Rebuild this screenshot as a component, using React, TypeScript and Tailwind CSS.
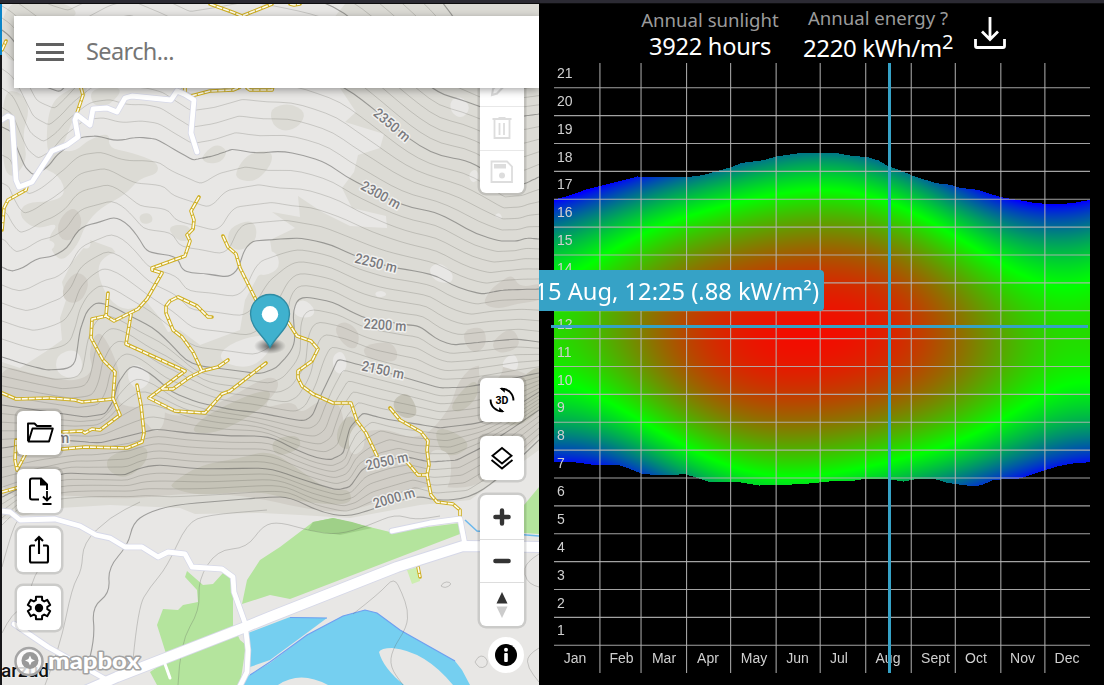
import { useLayoutEffect, useRef } from "react";
import type { ReactNode } from "react";

type Pt = [number, number];

const parse = (s: string): Pt[] =>
  s.trim().split(/\s+/).map((p) => p.split(",").map(Number) as Pt);

/* ---------- Terrain ---------- */

// Index contours every 50 m; "|" separates stretches between ridges and valleys.
const CONTOURS = [
  "2,-90|70,-80|130,-90|190,-70|300,-60|400,-40 445,4 453,16 480,60 512,72|524,70 539,68",
  "2,-30|70,-10|130,-30|190,-5|250,-15|333,4 347,15 400,60 432,88 443,97 457,98 480,107 508,116|524,116 539,114",
  "2,30|10,36 24,55 40,85 60,92|80,70 105,50 130,45|165,60 190,78|215,75 250,66|300,70 347,88 375,110 410,140 430,153 453,160 470,160 480,165 505,186|524,184 539,177",
  "2,127|12,132 17,148 25,167 33,175|47,168 57,155 80,137 97,136|117,141 137,137 157,139 175,150 193,160|213,156 233,149|253,154 270,152 288,150 330,164 350,180 361,184 380,195 402,206 442,213 455,222 475,234 500,241|517,241 527,238 539,239",
  "2,267|8,270 13,271|23,268 37,258 53,257 67,248 80,227 100,222 115,217|127,223 137,235 147,252 163,255 177,255 183,273 200,273 227,277|237,272 245,248 253,241 280,239 300,238|327,243 357,257 397,269 413,270 437,276 457,288 482,294|503,290 539,289",
  "2,357|27,365 47,370|67,369 75,365 80,330 87,310 97,302|110,305 133,318 150,325 167,340 190,365 233,370 260,374|275,369 290,353 295,343 293,310 298,299 307,297|333,302 363,318 407,325 420,326 437,340 453,345|483,342 517,339 539,342",
  "2,405|50,412 85,417|105,414 114,400 117,385 128,368 136,366|150,373 173,393 200,403 233,410 262,413 285,418 303,421|312,417 320,397 332,372 338,359|360,365 403,377 440,388|467,387 500,381 539,373",
  "2,448|60,440|100,443 140,433 157,429|187,433 233,436 270,436 290,447 313,457 330,460|343,454 350,427 363,413|385,419 417,424 440,428|480,423 510,410 539,392",
  "2,497|20,488|63,473 127,475 140,467 160,465|200,469 270,468 303,480 337,490|350,487 363,468 387,460 407,457|430,462 457,460|483,447 510,430 539,410",
  "2,532|20,512|60,505 100,502 147,502 173,505|220,501 270,497 290,497 320,512 347,517|370,510 400,502 417,495|437,501 470,498|497,480 539,440",
].map((c) => {
  const parts = c.split("|").map(parse);
  return parts.slice(1).map((p, i) => [parts[i][parts[i].length - 1], ...p]);
});

const SAMPLES = 12;

function resample(line: Pt[]): Pt[] {
  const acc = [0];
  for (let i = 1; i < line.length; i++)
    acc.push(acc[i - 1] + Math.hypot(line[i][0] - line[i - 1][0], line[i][1] - line[i - 1][1]));
  const total = acc[acc.length - 1];
  return Array.from({ length: SAMPLES }, (_, k) => {
    const d = ((k + 1) / SAMPLES) * total;
    let i = 1;
    while (i < line.length - 1 && acc[i] < d) i++;
    const t = (d - acc[i - 1]) / (acc[i] - acc[i - 1] || 1);
    return [
      line[i - 1][0] + (line[i][0] - line[i - 1][0]) * t,
      line[i - 1][1] + (line[i][1] - line[i - 1][1]) * t,
    ] as Pt;
  });
}

// Open curve through the midpoints of the given polyline.
function curve(p: Pt[]) {
  let d = `M${p[0][0]},${p[0][1]}`;
  for (let i = 1; i < p.length - 1; i++)
    d += `Q${p[i][0].toFixed(1)},${p[i][1].toFixed(1)} ${((p[i][0] + p[i + 1][0]) / 2).toFixed(1)},${((p[i][1] + p[i + 1][1]) / 2).toFixed(1)}`;
  const e = p[p.length - 1];
  return d + `L${e[0]},${e[1]}`;
}

function blob(s: string) {
  const p = parse(s);
  const mid = (a: Pt, b: Pt) => `${(a[0] + b[0]) / 2},${(a[1] + b[1]) / 2}`;
  return (
    `M${mid(p[p.length - 1], p[0])}` +
    p.map((q, i) => `Q${q[0]},${q[1]} ${mid(q, p[(i + 1) % p.length])}`).join("") +
    "Z"
  );
}

const sampled = CONTOURS.map((c) => [c[0][0], ...c.map(resample).flat()]);
const minorLines: string[] = [];
for (let i = 0; i < sampled.length - 1; i++)
  for (let k = 1; k < 5; k++)
    minorLines.push(
      curve(
        sampled[i].map((p, j) => {
          const q = sampled[i + 1][j];
          const t = k / 5;
          return [p[0] + (q[0] - p[0]) * t, p[1] + (q[1] - p[1]) * t] as Pt;
        })
      )
    );
const majorLines = sampled.slice(0, 9).map(curve);
majorLines.push(
  curve(parse("90,657 95,637 92,607 110,593 108,568 128,545 133,523 147,513 173,505 220,501 270,497 290,497 320,512 347,517 370,510 417,495 437,501 470,498 497,480 539,440"))
);

const VALLEY_LINES = [
  "45,685 60,647 72,587 82,570 83,543 110,517 140,502",
  "133,660 138,607 150,587 167,567 187,523 207,515 267,510",
  "178,685 180,643 200,610 198,580 217,550 247,548 263,525 280,522 310,531 338,535 370,525 395,514 415,520 440,516",
  "2,567 12,530 20,517",
  "2,633 12,612 32,605 30,585 40,567",
  "353,614 380,593 394,577 402,593 408,610 407,627 392,650 390,667 403,685",
  "441,586 443,582 450,582 451,585 445,588 441,586",
  "475,662 478,656 484,656 488,661 486,667 479,668 475,662",
  "539,554 526,562 524,575 530,584 539,587",
  "539,648 527,655 528,668 539,682",
].map((s) => curve(parse(s)));

const SHADE_LIGHT = [
  "2,0 55,0 78,10 72,20 40,16 30,60 2,62",
  "2,90 22,92 30,110 22,135 28,160 12,180 2,165",
  "48,105 70,88 92,84 72,120 62,150 46,158",
  "35,165 58,150 75,152 88,140 110,132 108,148 130,152 158,162 158,174 140,178 125,195 100,208 85,225 78,245 60,264 46,240 60,222 35,230 18,215 26,202 50,202 66,195 60,175",
  "90,88 125,86 110,106 92,106",
  "200,158 215,143 228,150 222,162 208,164",
  "235,172 248,153 272,150 272,164 256,182 238,180",
  "270,108 290,103 306,112 300,126 285,132 272,125",
  "228,228 254,218 258,240 240,252 228,245",
  "166,226 190,224 192,240 178,242",
  "138,215 150,212 154,222 142,225",
];
const SLOPE =
  "345,4 539,4 539,450 470,500 420,505 350,518 300,515 262,513 195,514 180,508 110,505 60,508 2,520 2,362 20,368 45,352 62,340 60,318 66,300 62,282 72,262 90,240 112,248 124,262 130,285 145,300 160,318 168,332 180,330 200,345 240,330 245,300 258,276 274,266 270,240 295,228 272,212 300,217 298,196 322,212 350,226 387,228 386,216 352,208 342,188 354,172 358,155 380,148 384,134 345,122 356,112 340,88 300,60";
const LIGHT_SPOTS = [
  "105,255 130,248 140,262 150,300 128,312 108,300 96,270",
  "56,355 76,348 84,365 76,380 56,374",
  "254,260 262,250 277,252 280,268 266,276 255,273",
  "80,240 91,238 90,249 81,248",
  "155,256 178,254 200,276 228,280 238,266 250,300 222,322 200,324 180,298 160,290",
  "226,345 262,333 274,345 258,364 240,368 218,360",
  "128,367 140,364 153,378 140,392 128,382",
  "428,268 440,262 454,274 451,284 434,281",
  "450,100 462,96 471,108 462,119 451,113",
  "468,174 476,168 480,178 472,184",
  "493,216 500,212 503,220",
  "292,306 304,298 316,310 311,318 296,317",
  "332,356 342,350 348,364 342,375 334,371",
  "503,360 514,352 520,366 510,377 502,370",
  "153,392 165,396 165,425 154,434 142,415",
  "423,456 452,452 450,490 430,500",
  "350,430 362,421 366,450 350,454",
  "374,293 382,290 388,295 378,298",
  "30,246 44,238 58,244 44,256 20,262",
];
const SHADE_MID = [
  "58,220 74,205 84,222 72,242 58,238",
  "62,288 76,270 90,280 84,298 74,304 64,300",
  "-8,362 40,376 75,382 94,372 88,352 98,328 112,350 122,380 116,402 132,408 150,405 180,420 230,398 270,374 282,385 260,410 294,400 300,415 322,398 342,404 345,440 380,426 420,442 450,410 458,380 480,360 550,380 550,430 500,470 470,490 420,484 350,514 300,508 260,498 200,492 120,500 60,494 -8,500",
  "500,282 512,274 520,288 545,282 545,300 515,304 500,309 482,305 490,290",
  "333,328 345,320 360,332 357,350 344,346",
  "364,345 390,341 398,352 396,362 378,361 364,356",
  "463,330 484,326 487,345 475,354 465,345",
  "493,340 512,326 522,345 505,354 493,350",
];
const SHADE_DARK = [
  "188,432 210,412 270,386 270,402 240,422 213,434",
  "108,455 147,443 148,462 125,480 106,470",
  "173,482 200,465 240,458 270,450 300,470 330,492 350,488 352,506 300,502 255,490 200,496 170,488",
  "338,425 352,413 360,430 350,452 336,444",
  "390,402 408,390 420,415 402,420",
  "270,440 298,434 302,448 276,458",
  "448,407 475,376 480,395 460,414",
  "434,428 452,430 472,445 455,457 440,452",
  "498,402 545,355 545,410 508,432",
];

const TRACKS = [
  "210,4 232,12 242,16 262,8 272,4",
  "81,88 83,95 77,113", "185,86 185,92", "191,96 210,91 233,90 240,87",
  "247,88 250,90 272,90 273,86", "2,50 6,41", "27,186 26,190 8,200 4,208 2,230",
  "290,4 294,5 300,4",
  "199,197 191,211 194,220 193,229 187,235 190,241 185,256 152,268 152,270 162,273 147,299 138,309 114,321 106,316 92,319 91,338 103,360 115,372 113,398 120,415 100,430 92,429 85,433 82,431 62,432",
  "108,293 106,316", "131,314 126,344 185,371 149,398 175,411 205,413 222,394 230,391 266,363",
  "162,389 173,389 190,377 202,371 218,367 228,360",
  "202,371 193,352 182,337 173,330 166,313 166,306 170,301 178,297 197,306 208,317 212,317",
  "223,236 228,247 236,254 240,268 256,300",
  "288,322 297,336 311,341 318,349 312,361 298,371 298,378 302,386 313,394 333,403 351,403 357,421 366,433 378,458",
  "407,462 418,475 427,475",
  "390,408 400,420 421,432 428,441 427,450 429,465 427,475 431,495 437,502 453,504 460,510 460,517",
  "2,393 16,399 50,398 75,400 82,402 113,399",
  "137,385 141,405 144,433 142,442 127,448 85,447 62,449",
  "25,455 17,470 15,460 16,440", "2,492 20,487", "418,567 420,577",
];

const ROADS = [
  "0,121 8,116 12,118 16,180 19,187 32,182 52,151 67,145 78,137 75,120 77,115 90,125 93,109 107,108 117,112 125,98 132,96 171,100 177,91 184,94 194,100 191,133 197,152",
  "0,511 10,512 20,520 55,519 80,526 96,535 110,538 125,547 142,547 158,557 168,552 185,554 192,567 222,569 233,577 234,592 245,623 248,650 247,672 238,690",
  "14,624 48,647 107,680",
  "392,531 430,523 460,519 465,545",
];
const HIGHWAY = "85,691 117,677 243,628 270,617 397,567 463,546 539,547";

const LABELS: [number, number, number, string][] = [
  [392, 125, 40, "2350 m"], [381, 195, 29, "2300 m"], [376, 263, 14, "2250 m"],
  [385, 325, 4, "2200 m"], [383, 370, 12, "2150 m"], [387, 461, -12, "2050 m"], [394, 498, -16, "2000 m"],
];

function Blobs({ list, fill }: { list: string[]; fill: string }) {
  return (
    <g fill={fill}>
      {list.map((p) => <path key={p} d={blob(p)} />)}
    </g>
  );
}

function Contours({ list, stroke, width }: { list: string[]; stroke: string; width: number }) {
  return (
    <g fill="none" stroke={stroke} strokeWidth={width} strokeLinejoin="round">
      {list.map((d, i) => <path key={i} d={d} />)}
    </g>
  );
}

function Lines({ list, stroke, width, dash }: { list: string[]; stroke: string; width: number; dash?: string }) {
  return (
    <g fill="none" stroke={stroke} strokeWidth={width} strokeDasharray={dash} strokeLinejoin="round" strokeLinecap={dash ? "butt" : "round"}>
      {list.map((p, i) => <polyline key={i} points={p} />)}
    </g>
  );
}

function Terrain() {
  return (
    <svg width="537" height="681" viewBox="2 4 537 681" className="block">
      <rect x="2" y="4" width="537" height="681" fill="#e8e7e5" />
      <polygon fill="#b4e49d" points="242,604 247,580 260,560 280,547 313,522 333,518 390,532 460,523 460,534 290,599 270,595" />
      <polygon fill="#dcdbd5" points={SLOPE} />
      <Blobs fill="#dcdbd5" list={SHADE_LIGHT} />
      <Blobs fill="#e8e7e5" list={LIGHT_SPOTS.slice(0, 14)} />
      <Blobs fill="#d1cec7" list={SHADE_MID} />
      <Blobs fill="#c5c3b7" list={SHADE_DARK} />
      <Blobs fill="#dcdbd5" list={["148,390 166,394 162,432 138,420", "428,448 452,452 449,482 430,480", "348,432 364,422 365,450 350,457", "370,400 390,396 394,412 373,412", "478,355 500,350 505,375 480,390", ...LIGHT_SPOTS.slice(14, 17)]} />
      <Blobs fill="#e8e7e5" list={LIGHT_SPOTS.slice(17)} />
      <polygon fill="#9fd088" points="313,522 333,518 352,522 372,528 340,535 308,530" />
      <polygon fill="#b4e49d" points="187,571 203,585 213,584 223,573 233,580 233,625 240,640 246,645 240,685 157,685 150,672 168,660 157,625 163,609 178,610 183,605 198,602 197,590 185,577" />
      <polygon fill="#b4e49d" points="539,487 524,505 524,533 539,534" />
      <polygon fill="#cdeeb0" points="407,570 412,584 420,581 418,567" />
      <g fill="#75cff0">
        <polygon points="248,633 290,617 327,618 300,638 270,660 250,667" />
        <polygon points="246,677 270,663 307,635 343,616 365,610 377,613 400,630 455,661 462,670 470,685 240,685" />
      </g>
      <path d="M250,675 L270,662 L307,635 L343,616 L365,610 L377,613 L400,630 L455,661 M290,617.500 L327,618" fill="none" stroke="#6f9ff0" strokeWidth="1.200" />
      <path d="M379,652 Q381,648 392,648 Q425,651 453,685 L404,685 Q383,668 379,652Z M278,685 Q300,670 328,685Z" fill="#e8e7e5" />
      <Contours list={minorLines} stroke="rgba(90,90,85,.27)" width={0.9} />
      <Contours list={VALLEY_LINES} stroke="rgba(90,90,85,.3)" width={0.9} />
      <Contours list={majorLines} stroke="rgba(90,90,88,.52)" width={1.1} />
      <polyline points="465,520 477,531 539,536" fill="none" stroke="#6cb8ec" strokeWidth="1.500" />
      <Lines list={TRACKS} stroke="#ceae20" width={3.6} />
      <Lines list={TRACKS} stroke="#fffdf0" width={1.6} dash="6 1" />
      <Lines list={ROADS} stroke="#d6d8e8" width={6.4} />
      <Lines list={[HIGHWAY]} stroke="#d6d8e8" width={12} />
      <Lines list={ROADS} stroke="#fff" width={4.8} />
      <Lines list={[HIGHWAY, "165,664 170,678"]} stroke="#fff" width={3} />
      <Lines list={[HIGHWAY]} stroke="#fff" width={10} />
      <g className="font-['Roboto',sans-serif]" fontSize="14" fontWeight="500" fill="#7a7a7e" stroke="#f0f0ee" strokeWidth="3" paintOrder="stroke" textAnchor="middle" strokeLinejoin="round">
        {LABELS.map(([x, y, a, t]) => (
          <text key={t} transform={`translate(${x} ${y}) rotate(${a})`} y="4.800" textLength="43" lengthAdjust="spacingAndGlyphs">{t}</text>
        ))}
        <text x="63" y="443">m</text>
      </g>
      <defs>
        <radialGradient id="pinShadow">
          <stop offset="0" stopColor="#000" stopOpacity=".6" />
          <stop offset="1" stopColor="#000" stopOpacity="0" />
        </radialGradient>
      </defs>
      <ellipse cx="270" cy="346" rx="16" ry="8" fill="url(#pinShadow)" />
      <path d="M270,347.500 C264,336 250.500,328 250.500,314 A19.500,19.500 0 0 1 289.500,314 C289.500,328 276,336 270,347.500Z" fill="#3fb1ce" stroke="#2f8ba3" strokeWidth="1.300" />
      <circle cx="270" cy="314.300" r="8.200" fill="#fff" />
      <text x="1" y="677" className="font-['Roboto',sans-serif]" fontSize="18.500" fontWeight="500" textLength="48" lengthAdjust="spacingAndGlyphs" fill="#111" stroke="#eee" strokeWidth="2" paintOrder="stroke">arzud</text>
      <g>
        <circle cx="29" cy="661.500" r="13.500" fill="#fff" fillOpacity=".8" stroke="#a5a5a5" strokeWidth="2.500" />
        <circle cx="30" cy="660.500" r="8.500" fill="#999" />
        <path d="M30,655.500 L31.600,659 L35,660.500 L31.600,662 L30,665.500 L28.400,662 L25,660.500 L28.400,659Z" fill="#fff" />
        <text x="48" y="669" className="font-['Lato',sans-serif]" fontWeight="900" fontSize="22.500" textLength="92" lengthAdjust="spacingAndGlyphs" fill="#fff" stroke="#a3a3a3" strokeWidth="3" paintOrder="stroke" strokeLinejoin="round">mapbox</text>
      </g>
    </svg>
  );
}

/* ---------- Map controls ---------- */

function MapButton({ children }: { children: ReactNode }) {
  return (
    <button className="flex size-11 items-center justify-center rounded-[6px] bg-white text-black shadow-[0_0_0_2.5px_rgba(0,0,0,0.12)]">
      {children}
    </button>
  );
}

const GEAR = Array.from({ length: 6 }, (_, k) =>
  [[-22, 8.4], [-15, 11.6], [15, 11.6], [22, 8.4]].map(([a, r]) => {
    const t = ((k * 60 - 90 + a) * Math.PI) / 180;
    return `${(14 + r * Math.cos(t)).toFixed(2)},${(14 + r * Math.sin(t)).toFixed(2)}`;
  }).join(" ")
).join(" ");

function LeftTools() {
  return (
    <div className="absolute left-[15px] top-[407px] flex flex-col gap-[14.3px]">
      <MapButton>
        <svg width="28" height="24" viewBox="0 0 28 24" fill="none" stroke="currentColor" strokeWidth="1.900" className="translate-x-[1px]">
          <path d="M2,20 V2.500 H8.500 L11,5 H25.500 M2.500,20.500 L6.500,7.500 H26.800 L23,20.500Z" strokeLinejoin="round" />
        </svg>
      </MapButton>
      <MapButton>
        <svg width="26" height="30" viewBox="0 0 26 30" fill="none" stroke="currentColor" strokeWidth="2">
          <path d="M13,23.500 H6 Q4,23.500 4,21.500 V4.500 Q4,2.500 6,2.500 H15 L21,8.500 V14" />
          <path d="M14,2 L21.800,9.500 H14Z" fill="currentColor" stroke="none" />
          <path d="M21,15 V24 M17,20.500 L21,24.500 L25,20.500 M16.500,28 H25.500" strokeWidth="1.800" />
        </svg>
      </MapButton>
      <MapButton>
        <svg width="24" height="30" viewBox="0 0 24 30" fill="none" stroke="currentColor" strokeWidth="2.100">
          <path d="M8,10.500 H4.500 Q3,10.500 3,12 V26 Q3,27.500 4.500,27.500 H19.500 Q21,27.500 21,26 V12 Q21,10.500 19.500,10.500 H16 M12,19 V3 M8,6 L12,2 L16,6" />
        </svg>
      </MapButton>
      <MapButton>
        <svg width="28" height="28" viewBox="0 0 28 28">
          <polygon points={GEAR} fill="none" stroke="#000" strokeWidth="2" strokeLinejoin="round" />
          <circle cx="14" cy="14" r="4.200" />
        </svg>
      </MapButton>
    </div>
  );
}

function DrawTools() {
  return (
    <div className="absolute left-[478px] top-[40px] flex w-11 flex-col divide-y divide-[#e8e8e8] rounded-[6px] bg-white text-[#dddddd] shadow-[0_0_0_2.5px_rgba(0,0,0,0.12)]">
      <div className="flex h-[63px] items-end justify-center pb-[9px] pr-[4px]">
        <svg width="22" height="22" viewBox="0 0 22 22" fill="none" stroke="currentColor" strokeWidth="2"><path d="M3,20 L4,14 L15,3 L19,7 L8,18.500Z" /></svg>
      </div>
      <div className="flex h-11 items-center justify-center pb-[2px]">
        <svg width="22" height="24" viewBox="0 0 22 24" fill="none" stroke="currentColor" strokeWidth="1.800">
          <path d="M1.500,3 H20.500 M7.500,2 H14.500 M3.500,3 V22 H18.500 V3 M8.500,7 V19 M13,7 V19" />
        </svg>
      </div>
      <div className="flex h-[42px] items-center justify-center">
        <svg width="24" height="24" viewBox="0 0 24 24" fill="none" stroke="currentColor" strokeWidth="1.800">
          <path d="M1.500,1.500 H17 L22,6.500 V22 H1.500Z" />
          <rect x="4" y="4" width="12" height="4.500" fill="currentColor" stroke="none" />
          <circle cx="12" cy="15.500" r="3" fill="currentColor" stroke="none" />
        </svg>
      </div>
    </div>
  );
}

function ZoomTools() {
  return (
    <div className="absolute left-[478px] top-[491px] flex w-11 flex-col divide-y divide-[#dddddd] rounded-[6px] bg-white shadow-[0_0_0_2.5px_rgba(0,0,0,0.12)]">
      <div className="flex h-[45px] items-center justify-center">
        <svg width="18" height="18" viewBox="0 0 18 18" stroke="#333" strokeWidth="4.400" strokeLinecap="round"><path d="M9,2.400 V15.600 M2.400,9 H15.600" /></svg>
      </div>
      <div className="flex h-[43px] items-center justify-center">
        <svg width="18" height="18" viewBox="0 0 18 18" stroke="#333" strokeWidth="4.400" strokeLinecap="round"><path d="M2.400,9 H15.600" /></svg>
      </div>
      <div className="flex h-[43px] items-center justify-center">
        <svg width="12" height="26" viewBox="0 0 12 26"><path d="M6,0 L11.500,11.500 H0.500Z" fill="#333" /><path d="M6,26 L11.500,14.500 H0.500Z" fill="#ccc" /></svg>
      </div>
    </div>
  );
}

function RotateIcon() {
  return (
    <svg width="28" height="28" viewBox="0 0 28 28" fill="none" stroke="currentColor" strokeWidth="1.900">
      <path d="M13,2.800 A11.400,11.400 0 0 1 25.400,14.500 M2.600,13.500 A11.400,11.400 0 0 0 15,25.200" />
      <path d="M11.500,2 L16.800,2 L16.800,6.800Z M16.500,26 L11.200,26 L11.200,21.200Z" fill="currentColor" stroke="none" />
      <text x="14" y="18" textAnchor="middle" className="font-['Roboto',sans-serif]" fontSize="11" fontWeight="700" textLength="13" lengthAdjust="spacingAndGlyphs" fill="currentColor" stroke="none">3D</text>
    </svg>
  );
}

function MapPanel() {
  return (
    <div className="relative h-full w-[537px] shrink-0 overflow-hidden">
      <Terrain />
      <DrawTools />
      <div className="absolute left-[12px] right-0 top-[12px] flex h-[72px] items-center bg-white pl-[22px] shadow-[0_2px_8px_rgba(0,0,0,0.35)]">
        <div className="flex w-[28px] flex-col gap-[4.5px]">
          <span className="h-[3px] bg-[#616161]" />
          <span className="h-[3px] bg-[#616161]" />
          <span className="h-[3px] bg-[#616161]" />
        </div>
        <span className="ml-[22px] font-['Noto_Sans',sans-serif] text-[23.5px] tracking-[-0.6px] text-[#757575]">Search...</span>
      </div>
      <LeftTools />
      <div className="absolute left-[478px] top-[374px] flex flex-col gap-[14px]">
        <MapButton><RotateIcon /></MapButton>
        <MapButton>
          <svg width="24" height="26" viewBox="0 0 24 26" fill="none" stroke="currentColor" strokeWidth="1.900">
            <path d="M12,3 L21.500,10.800 L12,18.500 L2.500,10.800Z M1.500,15 L12,23.500 L22.500,15" />
          </svg>
        </MapButton>
      </div>
      <ZoomTools />
      <div className="absolute left-[486px] top-[633px] grid size-9 place-items-center rounded-full bg-white">
        <svg width="22" height="22" viewBox="0 0 22 22">
          <circle cx="11" cy="11" r="11" fill="#000" />
          <circle cx="11" cy="5.700" r="2" fill="#fff" />
          <rect x="9.200" y="9" width="3.600" height="9" rx="1" fill="#fff" />
        </svg>
      </div>
    </div>
  );
}

/* ---------- Sunlight chart ---------- */

const PLOT = { left: 554, right: 1090, oneAM: 645, hour: 27.875 };
const LATITUDE = (37.7 * Math.PI) / 180;
const MONTHS: [string, number, number][] = [
  ["Jan", 31, 575], ["Feb", 28, 621.5], ["Mar", 31, 664], ["Apr", 30, 708], ["May", 31, 754], ["Jun", 30, 797.5],
  ["Jul", 31, 839], ["Aug", 31, 888], ["Sept", 30, 935.5], ["Oct", 31, 976], ["Nov", 30, 1022.5], ["Dec", 31, 1067],
];

const SUNSET = parse(
  "554,199 569,195 587,188.500 612,182.500 637,176 655,177 684,177 702,174.700 730.600,166.700 741,162.500 763,159.700 777,155.700 802,152.300 835,152.300 849,155 867,156.700 878,160 887,165.300 900,170 914,176 936,182.700 950,184.300 959,187.300 977,189.300 1000.400,196.700 1022,200.300 1036,202.700 1054,203.700 1072,202.700 1090,199.300"
);
const SUNRISE = parse(
  "554,461 576,462 597.500,465 619,464.700 630,468.700 642.500,473.700 666,474.700 684,473.700 695,476.700 709,481.700 741,482 759,485 777,484.700 806,483.300 828,481 853,480.300 865.500,478 889,478.700 903,481 918,478 936,479 946,482.300 972,485.700 981,484.700 993,479.300 1018,478.300 1043.600,470 1058,465.700 1072,463 1090,461.700"
);

function edgeAt(line: Pt[], x: number) {
  let i = 1;
  while (i < line.length - 1 && line[i][0] < x) i++;
  const [a, b] = [line[i - 1], line[i]];
  return a[1] + ((b[1] - a[1]) * (x - a[0])) / (b[0] - a[0]);
}

function SunHeatmap() {
  const ref = useRef<HTMLCanvasElement>(null);
  useLayoutEffect(() => {
    const ctx = ref.current?.getContext("2d");
    if (!ctx) return;
    const w = 536;
    const h = 622;
    const img = ctx.createImageData(w, h);
    for (let px = 0; px < w; px++) {
      const day = (px / w) * 365;
      const decl = ((-23.44 * Math.PI) / 180) * Math.cos((2 * Math.PI * (day + 10)) / 365);
      const b = (2 * Math.PI * (day - 81)) / 364;
      const eot = (9.87 * Math.sin(2 * b) - 7.53 * Math.cos(b) - 1.5 * Math.sin(b)) / 60;
      const top = edgeAt(SUNSET, px + PLOT.left);
      const bottom = edgeAt(SUNRISE, px + PLOT.left);
      for (let py = 0; py < h; py++) {
        const y = py + 63;
        if (y < top || y > bottom) continue;
        const time = (PLOT.oneAM - y) / PLOT.hour + 1;
        const angle = ((time - 12.18 + eot) * Math.PI) / 12;
        const s = Math.max(0, Math.sin(LATITUDE) * Math.sin(decl) + Math.cos(LATITUDE) * Math.cos(decl) * Math.cos(angle));
        const t = Math.pow(s, 0.777);
        const o = (py * w + px) * 4;
        img.data[o] = t > 0.5 ? 255 * (2 * t - 1) : 0;
        img.data[o + 1] = t > 0.5 ? 255 * (2 - 2 * t) : 510 * t;
        img.data[o + 2] = t > 0.5 ? 0 : 255 * (1 - 2 * t);
        img.data[o + 3] = 255;
      }
    }
    ctx.putImageData(img, 0, 0);
  }, []);
  return <canvas ref={ref} width={536} height={622} className="absolute left-[15px] top-0" />;
}

function ChartGrid() {
  let days = 0;
  const columns = MONTHS.slice(0, -1).map(([, n]) => {
    days += n;
    return PLOT.left + (days / 365) * (PLOT.right - PLOT.left);
  });
  return (
    <svg width="565" height="622" viewBox="539 63 565 622" className="absolute left-0 top-0">
      <g stroke="#b4b4b4" strokeOpacity=".9" strokeWidth="1.100">
        {columns.map((x) => <line key={x} x1={x + 0.4} x2={x + 0.4} y1="63" y2="673" />)}
        {Array.from({ length: 21 }, (_, i) => {
          const y = PLOT.oneAM + 0.2 - i * PLOT.hour;
          return <line key={i} x1="554" x2="1090" y1={y} y2={y} />;
        })}
      </g>
      <g className="font-['Liberation_Sans',sans-serif]" fontSize="14" fill="#d0d0d0">
        {Array.from({ length: 21 }, (_, i) => (
          <text key={i} x="557" y={635.4 - i * PLOT.hour}>{i + 1}</text>
        ))}
        {MONTHS.map(([name, , x]) => (
          <text key={name} x={x} y="663" textAnchor="middle">{name}</text>
        ))}
      </g>
      <rect x="551" y="325" width="537" height="3" fill="#36a2c6" />
      <rect x="888" y="63" width="3" height="610" fill="#36a2c6" />
    </svg>
  );
}

function SunPanel() {
  return (
    <div className="flex h-full w-[565px] flex-col bg-black font-['Noto_Sans','Open_Sans',sans-serif]">
      <div className="flex h-[59px] shrink-0 pl-[91px] text-center text-white">
        <div className="w-[160px] pt-[3px]">
          <div className="text-[18.6px] leading-[26px] text-[#9b9b9b]">Annual sunlight</div>
          <div className="text-[23.6px] leading-[27px] tracking-[-0.25px]">3922 hours</div>
        </div>
        <div className="w-[176px] pt-[1px]">
          <div className="text-[18.6px] leading-[26px] text-[#9b9b9b]">Annual energy ?</div>
          <div className="whitespace-nowrap text-[24px] leading-[34px] tracking-[-0.35px]">
            2220 kWh/m<sup className="-top-[8px] text-[20px] leading-none">2</sup>
          </div>
        </div>
        <svg width="34" height="34" viewBox="0 0 34 34" fill="none" stroke="#fff" strokeWidth="2.800" className="ml-[7px] mt-[12px]">
          <path d="M17,1 V23.500 M9,15.500 L17,23.500 L25,15.500" />
          <path d="M2.500,23 V30 Q2.500,31.500 4,31.500 H30 Q31.500,31.500 31.500,30 V23" />
        </svg>
      </div>
      <div className="relative flex-1">
        <SunHeatmap />
        <ChartGrid />
        <div className="absolute left-0 top-[207px] flex h-[41px] w-[285px] items-center justify-end overflow-hidden rounded-r-[4px] bg-[#36a2c6] pr-[5px] pt-[3px] text-[23.7px] text-white">
          <span className="whitespace-nowrap">15 Aug, 12:25 (.88 kW/m²)</span>
        </div>
      </div>
    </div>
  );
}

export default function App() {
  return (
    <div className="flex h-[685px] w-[1104px] flex-col overflow-hidden bg-black">
      <div className="h-[4px] shrink-0 border-b border-[#0c0c0d] bg-[#2b2a33]" />
      <div className="flex min-h-0 flex-1">
        <div className="w-[2px] shrink-0 bg-[#17171a]">
          <div className="h-[51px] bg-[#0a84c8]" />
        </div>
        <MapPanel />
        <SunPanel />
      </div>
    </div>
  );
}
